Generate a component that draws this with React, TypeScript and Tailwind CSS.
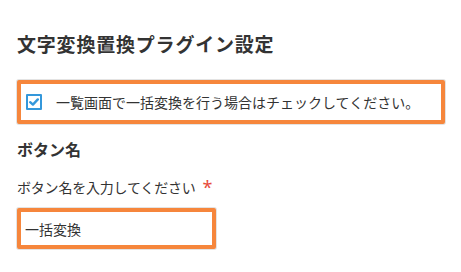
import { useState } from "react";

const font = {
  fontFamily: '"Noto Sans CJK JP", "Noto Sans", sans-serif',
};

function CheckIcon() {
  return (
    <svg width="10" height="8" viewBox="0 0 10 8" aria-hidden>
      <path d="M1.2 4.2 L3.9 6.6 L8.8 1.4" fill="none" stroke="#3498db" strokeWidth="2.4" strokeLinecap="round" strokeLinejoin="round" />
    </svg>
  );
}

export default function App() {
  const [checked, setChecked] = useState(true);
  const [name, setName] = useState("一括変換");

  return (
    <div className="min-h-[272px] w-[461px] bg-white text-[#333333]" style={font}>
      <div className="flex flex-col pl-[17px] pt-[32px]">
        <h1 className="text-[19px] font-bold leading-[24px] tracking-[0.8px]">文字変換置換プラグイン設定</h1>

        <label className="mt-[24px] flex h-[44px] w-[428px] cursor-pointer items-center rounded-[2px] border-4 border-[#f6863c] bg-white pl-[5px] shadow-[0_0_0_1px_#e3e3e3]">
          <span
            className="flex h-[16px] w-[16px] items-center justify-center rounded-[1px] border-2 border-[#3498db] bg-white"
            onClick={() => setChecked((c) => !c)}
          >
            {checked ? <CheckIcon /> : null}
          </span>
          <span className="ml-[14px] text-[14px] leading-[20px]">
            一覧画面で一括変換を行う場合はチェックしてください。
          </span>
        </label>

        <h2 className="mt-[14px] text-[16px] font-bold leading-[22px]">ボタン名</h2>

        <div className="mt-[17px] flex items-center text-[14px] leading-[20px] tracking-[-0.2px]">
          <span>ボタン名を入力してください</span>
          <span className="ml-[7px] text-[18px] leading-[20px] text-[#e74c3c]" style={{ fontFamily: '"Noto Sans", sans-serif' }}>
            *
          </span>
        </div>

        <input
          className="mt-[11px] h-[41px] w-[199px] rounded-[2px] border-4 border-[#f6863c] bg-white px-[4px] text-[14px] text-[#333333] shadow-[0_0_0_1px_#e3e3e3] outline-none"
          style={font}
          value={name}
          onChange={(e) => setName(e.target.value)}
        />
      </div>
    </div>
  );
}
